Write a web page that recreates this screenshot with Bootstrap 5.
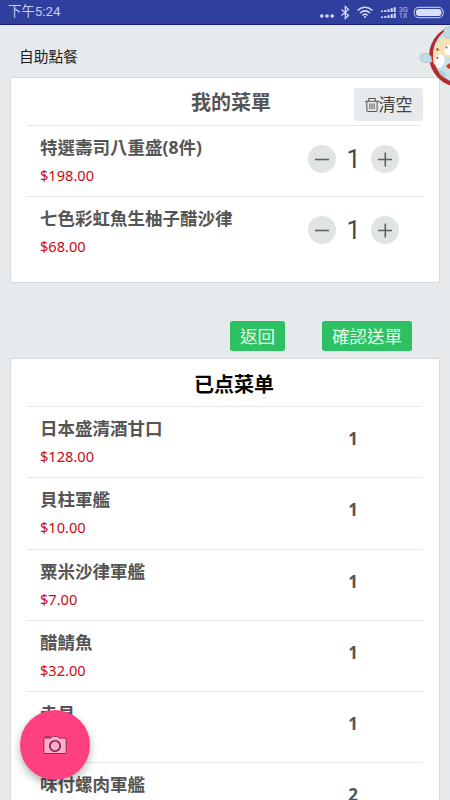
<!DOCTYPE html>
<html lang="zh-Hant">
<head>
<meta charset="utf-8">
<meta name="viewport" content="width=device-width, initial-scale=1">
<title>自助點餐</title>
<link href="https://cdn.jsdelivr.net/npm/bootstrap@5.3.0/dist/css/bootstrap.min.css" rel="stylesheet">
<style>
html,body{height:800px;overflow:hidden}
body{background:#e7eaec;color:#555;font-family:"Noto Sans","Noto Sans CJK TC",sans-serif;line-height:1}
.status{height:25px;background:#2f3f9e;border-bottom:1px solid #17207d;color:#c5cdf5;font:13.4px/26px Roboto,"Noto Sans CJK TC",sans-serif;padding-left:8px}
.app-title{height:52px;padding:21px 0 0 19px;font-size:14.7px;line-height:20px;color:#1c1c1c}
.panel{margin:0 10px;background:#fff;border:1px solid #d8dadb;padding:0 17px 0 16px}
.panel-a{height:206px}
.panel-b{height:460px;overflow:hidden}
.head{height:47px;font-size:20px;line-height:49px;font-weight:700;padding-left:13px}
.head-b{color:#050505;line-height:50px;padding-left:19px;font-family:"Noto Sans CJK SC",sans-serif}
.clear{right:-1px;top:10px;width:69px;height:33px;background:#e7eaec;border-radius:3px;font-size:17px;font-weight:400;line-height:32px;color:#444}
.dish{height:71.3px;border-top:1.5px solid #e7e9ea;padding:11px 0 0 13px}
.dish-name{font-size:17.5px;line-height:20px;font-weight:700}
.price{font-size:14.6px;line-height:20px;color:#c80b12;margin-top:8px}
.stepper{width:91px;margin-right:23px;margin-top:8px;height:28px}
.round{width:28px;height:28px;background:#e0e4e4;border-radius:50%}
.count{font:25px/30px Roboto,sans-serif;color:#484848;padding-top:2px}
.qty{width:20px;margin-right:59px;margin-top:11px;font-size:17px;line-height:20px;font-weight:700;text-align:center}
.actions{height:75px;padding:38px 38px 0 0;gap:37px}
.go{height:30px;padding:0 10px;border:0;border-radius:2.5px;background:#2ec163;color:#e2fbe9;font-size:17.5px;line-height:30px}
.fab{left:20px;top:710px;width:70px;height:70px;border-radius:50%;background:#fe4081;box-shadow:0 4px 9px rgba(0,0,0,.3)}
.mascot{left:418px;top:24px}
</style>
</head>
<body class="position-relative">
<header class="status d-flex align-items-center justify-content-between">
<span>下午5:24</span>
<svg width="134" height="24" viewBox="316 0 134 24" fill="none" stroke="#d5dbf8">
<g fill="#d5dbf8" stroke="none"><circle cx="321.800" cy="16" r="1.800"/><circle cx="327" cy="16" r="1.800"/><circle cx="332.200" cy="16" r="1.800"/></g>
<path d="M341.500 9.500l7 6-3.200 3V6.500l3.200 3-7 6" stroke-width="1.300"/>
<path d="M357.500 10.500q7.500-6.500 15 0M360 13q5-4.200 10 0M362.400 15.300q2.600-2 5.200 0" stroke-width="1.500"/><circle cx="365" cy="17" r="1.100" fill="#d5dbf8" stroke="none"/>
<path d="M382 12v-1.500M385.300 12v-2M388.500 12V9.200M391.700 12V8.200M394.700 12V7.300M382 18v-1.500M385.300 18v-2M388.500 18v-2.800M391.700 18v-3.800M394.700 18v-4.700" stroke-width="2.100"/>
<g fill="#bcc5ef" stroke="none" font-family="Roboto,sans-serif" font-size="7"><text x="399" y="11.500">3G</text><text x="399" y="18">1X</text></g>
<rect x="414.200" y="7.300" width="29" height="10.400" rx="4.500" stroke-width="1"/><rect x="416" y="9" width="25.500" height="7" rx="3" fill="#dbe0fa" stroke="none"/>
</svg>
</header>
<div class="app-title">自助點餐</div>
<section class="panel panel-a">
<div class="head text-center position-relative">我的菜單
<button class="clear btn p-0 border-0 position-absolute d-flex align-items-center justify-content-center"><svg width="14" height="16" viewBox="0 0 15 17" fill="none" stroke="#555" stroke-width="1.100"><path d="M0 4.500h15M4 4V1.500h7V4M2 5v9.500q0 1 1 1h9q1 0 1-1V5M5.200 7v6M7.500 7v6M9.800 7v6"/></svg><span class="ps-0">清空</span></button>
</div>
<div class="dish d-flex justify-content-between"><div><div class="dish-name">特選壽司八重盛(8件)</div><div class="price">$198.00</div></div>
<div class="stepper d-flex align-items-center justify-content-between"><span class="round"><svg class="d-block" width="28" height="28" stroke="#5c6161" stroke-width="1.600"><path d="M7 14.500h14"/></svg></span><span class="count">1</span><span class="round"><svg class="d-block" width="28" height="28" stroke="#5c6161" stroke-width="1.600"><path d="M7 14.500h14M14.300 7.500v14"/></svg></span></div></div>
<div class="dish d-flex justify-content-between"><div><div class="dish-name">七色彩虹魚生柚子醋沙律</div><div class="price">$68.00</div></div>
<div class="stepper d-flex align-items-center justify-content-between"><span class="round"><svg class="d-block" width="28" height="28" stroke="#5c6161" stroke-width="1.600"><path d="M7 14.500h14"/></svg></span><span class="count">1</span><span class="round"><svg class="d-block" width="28" height="28" stroke="#5c6161" stroke-width="1.600"><path d="M7 14.500h14M14.300 7.500v14"/></svg></span></div></div>
</section>
<div class="actions d-flex justify-content-end"><button class="btn go">返回</button><button class="btn go">確認送單</button></div>
<section class="panel panel-b">
<div class="head head-b text-center">已点菜单</div>
<div class="dish d-flex justify-content-between"><div><div class="dish-name">日本盛清酒甘口</div><div class="price">$128.00</div></div><div class="qty">1</div></div>
<div class="dish d-flex justify-content-between"><div><div class="dish-name">貝柱軍艦</div><div class="price">$10.00</div></div><div class="qty">1</div></div>
<div class="dish d-flex justify-content-between"><div><div class="dish-name">粟米沙律軍艦</div><div class="price">$7.00</div></div><div class="qty">1</div></div>
<div class="dish d-flex justify-content-between"><div><div class="dish-name">醋鯖魚</div><div class="price">$32.00</div></div><div class="qty">1</div></div>
<div class="dish d-flex justify-content-between"><div class="dish-name">赤貝</div><div class="qty">1</div></div>
<div class="dish d-flex justify-content-between"><div class="dish-name">味付螺肉軍艦</div><div class="qty">2</div></div>
</section>
<svg class="mascot position-absolute" width="32" height="66" viewBox="418 24 32 66">
<circle cx="460" cy="56" r="31" fill="#b52a2a"/>
<circle cx="462" cy="54.500" r="29" fill="#c9e0e6"/>
<path d="M433 60Q432 43 447 34l5-2v26l-10-3-8 10z" fill="#f5e3b8"/>
<path d="M444 36q-1-9 3-9h5v10q-5 3-8-1z" fill="#bddce6" stroke="#9fb9c2" stroke-width=".6"/>
<path d="M432 62q-10 2-12-3-1-6 6-6l5 3z" fill="#bddce6" stroke="#9fb9c2" stroke-width=".6"/>
<ellipse cx="440" cy="61" rx="4.500" ry="7" transform="rotate(12 440 61)" fill="#fff"/><ellipse cx="448.500" cy="50" rx="4" ry="5" fill="#fff"/>
<circle cx="437.500" cy="58" r=".9" fill="#555"/><circle cx="446.500" cy="47.500" r=".9" fill="#555"/><circle cx="437.500" cy="49.500" r="1.300" fill="#c8372d"/>
<path d="M446 66l4-3v6q-2 0-4-3z" fill="#c8372d"/><path d="M438 70q5 0 8 5l-1 3q-5-2-7-8z" fill="#a9cbd5"/>
</svg>
<button class="fab btn p-0 border-0 position-absolute d-flex align-items-center justify-content-center"><svg width="24" height="20" viewBox="0 0 24 20" fill="#ffaccb" stroke="#8c2850" stroke-width="1"><path d="M.8 4q0-1 1-1H8l1.500-1.700h5L16 3h6q1.200 0 1.200 1v13.500q0 1-1.200 1H2q-1.200 0-1.200-1z"/><path d="M2 1.800h5" /><circle cx="12" cy="11" r="5.200" stroke="#7b1c46" stroke-width="1.600"/></svg></button>
<script src="https://cdn.jsdelivr.net/npm/bootstrap@5.3.0/dist/js/bootstrap.bundle.min.js"></script>
</body>
</html>
